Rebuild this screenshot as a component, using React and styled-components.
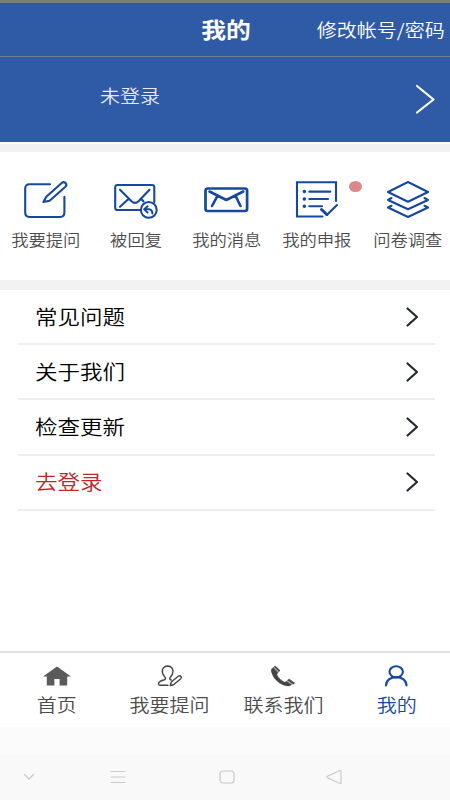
import React from 'react';
import styled, { createGlobalStyle } from 'styled-components';

const colors = {
  blue: '#2f5aa6',
  icon: '#1648a0',
  text: '#4c4c4c',
  divider: '#eeeeee',
  band: '#f2f2f2',
};

const GlobalStyle = createGlobalStyle`
  * {
    box-sizing: border-box;
  }
  body {
    margin: 0;
    background: #ffffff;
    font-family: "Noto Sans CJK SC", sans-serif;
  }
`;

const Screen = styled.div`
  width: 450px;
  height: 800px;
  display: flex;
  flex-direction: column;
  overflow: hidden;
  background: #ffffff;
`;

const StatusBar = styled.div`
  height: 3px;
  flex-shrink: 0;
  background: #7d7d7b;
`;

const Header = styled.header`
  height: 54px;
  flex-shrink: 0;
  display: grid;
  grid-template-columns: 1fr auto 1fr;
  align-items: center;
  padding: 0 5px 0 8px;
  background: ${colors.blue};
  border-bottom: 1px solid #777f8c;
  color: #ffffff;
`;

const Label = styled.span`
  display: inline-block;
  white-space: nowrap;
  font-size: ${props => props.$size}px;
  line-height: 24px;
  font-weight: ${props => props.$weight || 350};
  transform: scaleX(1.125);
  transform-origin: ${props => props.$origin || 'center'};
`;

const HeaderAction = styled.div`
  grid-column: 3;
  text-align: right;
`;

const HeaderTitle = styled.div`
  grid-column: 2;
`;

const Profile = styled.section`
  height: 85px;
  flex-shrink: 0;
  display: flex;
  align-items: center;
  justify-content: space-between;
  padding: 0 15px 0 100px;
  background: ${colors.blue};
  color: #e8e8e8;
`;

const ProfileName = styled.div`
  padding-bottom: 8px;
`;

const Band = styled.div`
  height: ${props => props.$height}px;
  flex-shrink: 0;
  background: ${colors.band};
  border-top: ${props => props.$gap || 0}px solid #ffffff;
`;

const Actions = styled.nav`
  width: 453px;
  height: 128px;
  flex-shrink: 0;
  display: grid;
  grid-template-columns: repeat(5, 1fr);
  padding-top: 26px;
`;

const Action = styled.div`
  position: relative;
  display: flex;
  flex-direction: column;
  align-items: center;
  gap: 5px;
  color: ${colors.text};
`;

const Badge = styled.i`
  position: absolute;
  top: 3px;
  right: 0;
  width: 13px;
  height: 11px;
  border-radius: 50%;
  background: #dc8888;
`;

const Icon = styled.svg`
  display: block;
  overflow: visible;
  fill: none;
  stroke: ${props => props.$color || colors.icon};
  stroke-width: ${props => props.$stroke || 2.1};
  stroke-linecap: round;
  stroke-linejoin: round;
`;

const List = styled.div`
  flex: 1;
  padding: 0 15px 0 18px;
`;

const Row = styled.div`
  height: 55.2px;
  display: flex;
  align-items: center;
  justify-content: space-between;
  padding: 0 17px;
  border-bottom: 2px solid ${colors.divider};
  color: ${props => (props.$danger ? '#c02626' : '#000000')};
`;

const TabBar = styled.nav`
  width: 453px;
  height: 76px;
  flex-shrink: 0;
  display: grid;
  grid-template-columns: repeat(4, 1fr);
  padding-top: 12px;
  border-top: 2px solid #e2e2e2;
`;

const Tab = styled.div`
  display: flex;
  flex-direction: column;
  align-items: center;
  gap: 5px;
  color: ${props => (props.$active ? colors.icon : colors.text)};
`;

const SystemBar = styled.div`
  height: 73px;
  flex-shrink: 0;
  display: grid;
  grid-template-columns: 58px 120px 97px 117px;
  justify-items: center;
  align-items: center;
  padding-top: 27px;
  background: linear-gradient(#fbfbfb 27px, #f9f9f9 27px);
`;

const actions = [
  {
    label: '我要提问',
    icon: (
      <>
        <path d="M30 6.3H9.5Q5.2 6.3 5.2 10.6V34.6Q5.2 39 9.5 39H40.2Q44.4 39 44.4 34.6V18.7" />
        <path d="M23.4 24L26.3 18.8L41.7 5Q43.6 3.3 45.5 5Q47.3 7 45.4 8.8L29.6 22.7Z" />
      </>
    ),
  },
  {
    label: '被回复',
    icon: (
      <>
        <path d="M30 32H6.5Q4.2 32 4.2 29.7V9.3Q4.2 7 6.5 7H41Q43.3 7 43.3 9.3V24" />
        <path d="M9 11.8L20.5 23.3Q24 26.5 27.5 23.3L38.5 11.8M18 20.5L9 28.8M30 20.5L32.5 23.5" />
        <circle cx="37.8" cy="31.9" r="7.9" />
        <path d="M36.6 28.2L33.2 31.3L36.6 34.6M33.8 31.3H38Q41.2 31.5 41.4 35.5" strokeWidth="2" />
      </>
    ),
  },
  {
    label: '我的消息',
    icon: (
      <>
        <rect x="4.5" y="10.5" width="41.6" height="22.5" rx="2.2" strokeWidth="2.7" />
        <path d="M8.5 13.5L25.3 22L42.3 13.5M16.5 17.8L11 28M34.5 17.8L39.5 28" strokeWidth="2.6" />
      </>
    ),
  },
  {
    label: '我的申报',
    badge: true,
    icon: (
      <>
        <path d="M30.5 38.5H5V4.3H44V23" strokeLinejoin="miter" />
        <path d="M17.3 13.6H38.3M17.3 21H36M17.3 28.2H30" />
        <path d="M29.5 31.5L34.8 36.5" strokeWidth="3" />
        <path d="M34.8 37L45 27" />
        <path d="M12.3 13.6H12.4M12.3 21H12.4M12.3 28.2H12.4" strokeWidth="3.5" />
      </>
    ),
  },
  {
    label: '问卷调查',
    icon: (
      <path d="M25 4L45 14L25 23.7L5 14ZM8.5 20L5 22L25 31.3L45 22L41.5 20M8.5 27.8L5 29.5L25 39L45 29.5L41.5 27.8" />
    ),
  },
];

const rows = ['常见问题', '关于我们', '检查更新', '去登录'];

const tabs = [
  {
    label: '首页',
    icon: (
      <path
        d="M1 11.5L15 1.5L29 11.5H25.2V20.5H17.6V14H12.4V20.5H4.8V11.5Z"
        fill="#5b5b5b"
        stroke="none"
      />
    ),
  },
  {
    label: '我要提问',
    icon: (
      <path
        d="M13 20.3H5Q2.5 20 4 17.3Q6 15.5 9.5 14.8Q11.5 13.7 9.5 11.5Q6.5 8 7.5 4.5Q9 1 13 1Q17.5 1.5 18 6Q18 9.5 15.3 12.2Q13.8 14 16.2 15M15.3 20.5L16.3 17L23.5 11Q25 10.2 26.1 11.5Q26.8 12.7 25.7 13.7L18.5 19.7Z"
        stroke="#444444"
        strokeWidth="1.4"
      />
    ),
  },
  {
    label: '联系我们',
    icon: (
      <path
        d="M6.2 1.8L7.3 1L12 5.6L10.9 6.7ZM5.3 2.5Q3 3.5 3.2 6Q4.5 13 11.5 18Q17.5 22 21.5 20.8Q23.3 20.3 23.5 19.5L18.6 16.3L16.5 17.3Q11 14.5 8.8 9.8L9.9 7.5ZM19.5 15.2L21 14L26.7 18L25.2 19.2Z"
        fill="#444444"
        stroke="#444444"
        strokeWidth="0.5"
      />
    ),
  },
  {
    label: '我的',
    active: true,
    icon: (
      <>
        <ellipse cx="15.2" cy="6.8" rx="6.7" ry="5.6" />
        <path d="M5 20.5C5.3 9.3 25.2 9.3 25.5 20.5" />
      </>
    ),
  },
];

const Chevron = () => (
  <Icon width="12" height="20" viewBox="0 0 12 20" $color="#222a33" $stroke={2.2}>
    <path d="M1.5 1.5L11 10L1.5 18.5" />
  </Icon>
);

const App = () => {
  return (
    <Screen>
      <GlobalStyle />
      <StatusBar />
      <Header>
        <HeaderTitle>
          <Label $size={22} $weight={700}>我的</Label>
        </HeaderTitle>
        <HeaderAction>
          <Label $size={17.8} $origin="right">修改帐号/密码</Label>
        </HeaderAction>
      </Header>
      <Profile>
        <ProfileName>
          <Label $size={17.8} $origin="left">未登录</Label>
        </ProfileName>
        <Icon width="20" height="30" viewBox="0 0 20 30" $color="#ffffff" $stroke={2.2}>
          <path d="M2 1L18.5 14.5L2 27.5" />
        </Icon>
      </Profile>
      <Band $height={10} $gap={2} />
      <Actions>
        {actions.map(item => (
          <Action key={item.label}>
            <Icon width="50" height="44" viewBox="0 0 50 44">{item.icon}</Icon>
            <Label $size={15.4}>{item.label}</Label>
            {item.badge && <Badge />}
          </Action>
        ))}
      </Actions>
      <Band $height={10} />
      <List>
        {rows.map(row => (
          <Row key={row} $danger={row === '去登录'}>
            <Label $size={20} $origin="left">{row}</Label>
            <Chevron />
          </Row>
        ))}
      </List>
      <TabBar>
        {tabs.map(tab => (
          <Tab key={tab.label} $active={tab.active}>
            <Icon width="30" height="22" viewBox="0 0 30 22">{tab.icon}</Icon>
            <Label $size={17.8}>{tab.label}</Label>
          </Tab>
        ))}
      </TabBar>
      <SystemBar>
        <Icon width="12" height="8" viewBox="0 0 12 8" $color="#c8c8c8" $stroke={1.2}>
          <path d="M1.5 1.5L6 6L10.5 1.5" />
        </Icon>
        <Icon width="16" height="14" viewBox="0 0 16 14" $color="#cccccc" $stroke={1.2}>
          <path d="M1 1.5H15M1 7H15M1 12.5H15" />
        </Icon>
        <Icon width="16" height="14" viewBox="0 0 16 14" $color="#c8c8c8" $stroke={1.2}>
          <rect x="1" y="1" width="14" height="12" rx="3" />
        </Icon>
        <Icon width="16" height="14" viewBox="0 0 16 14" $color="#c8c8c8" $stroke={1.2}>
          <path d="M14 0.5Q15 0.3 15 1.5V12.5Q15 13.7 14 13.5L1.5 7.8Q0.5 7 1.5 6.2Z" />
        </Icon>
      </SystemBar>
    </Screen>
  );
};

export default App;
